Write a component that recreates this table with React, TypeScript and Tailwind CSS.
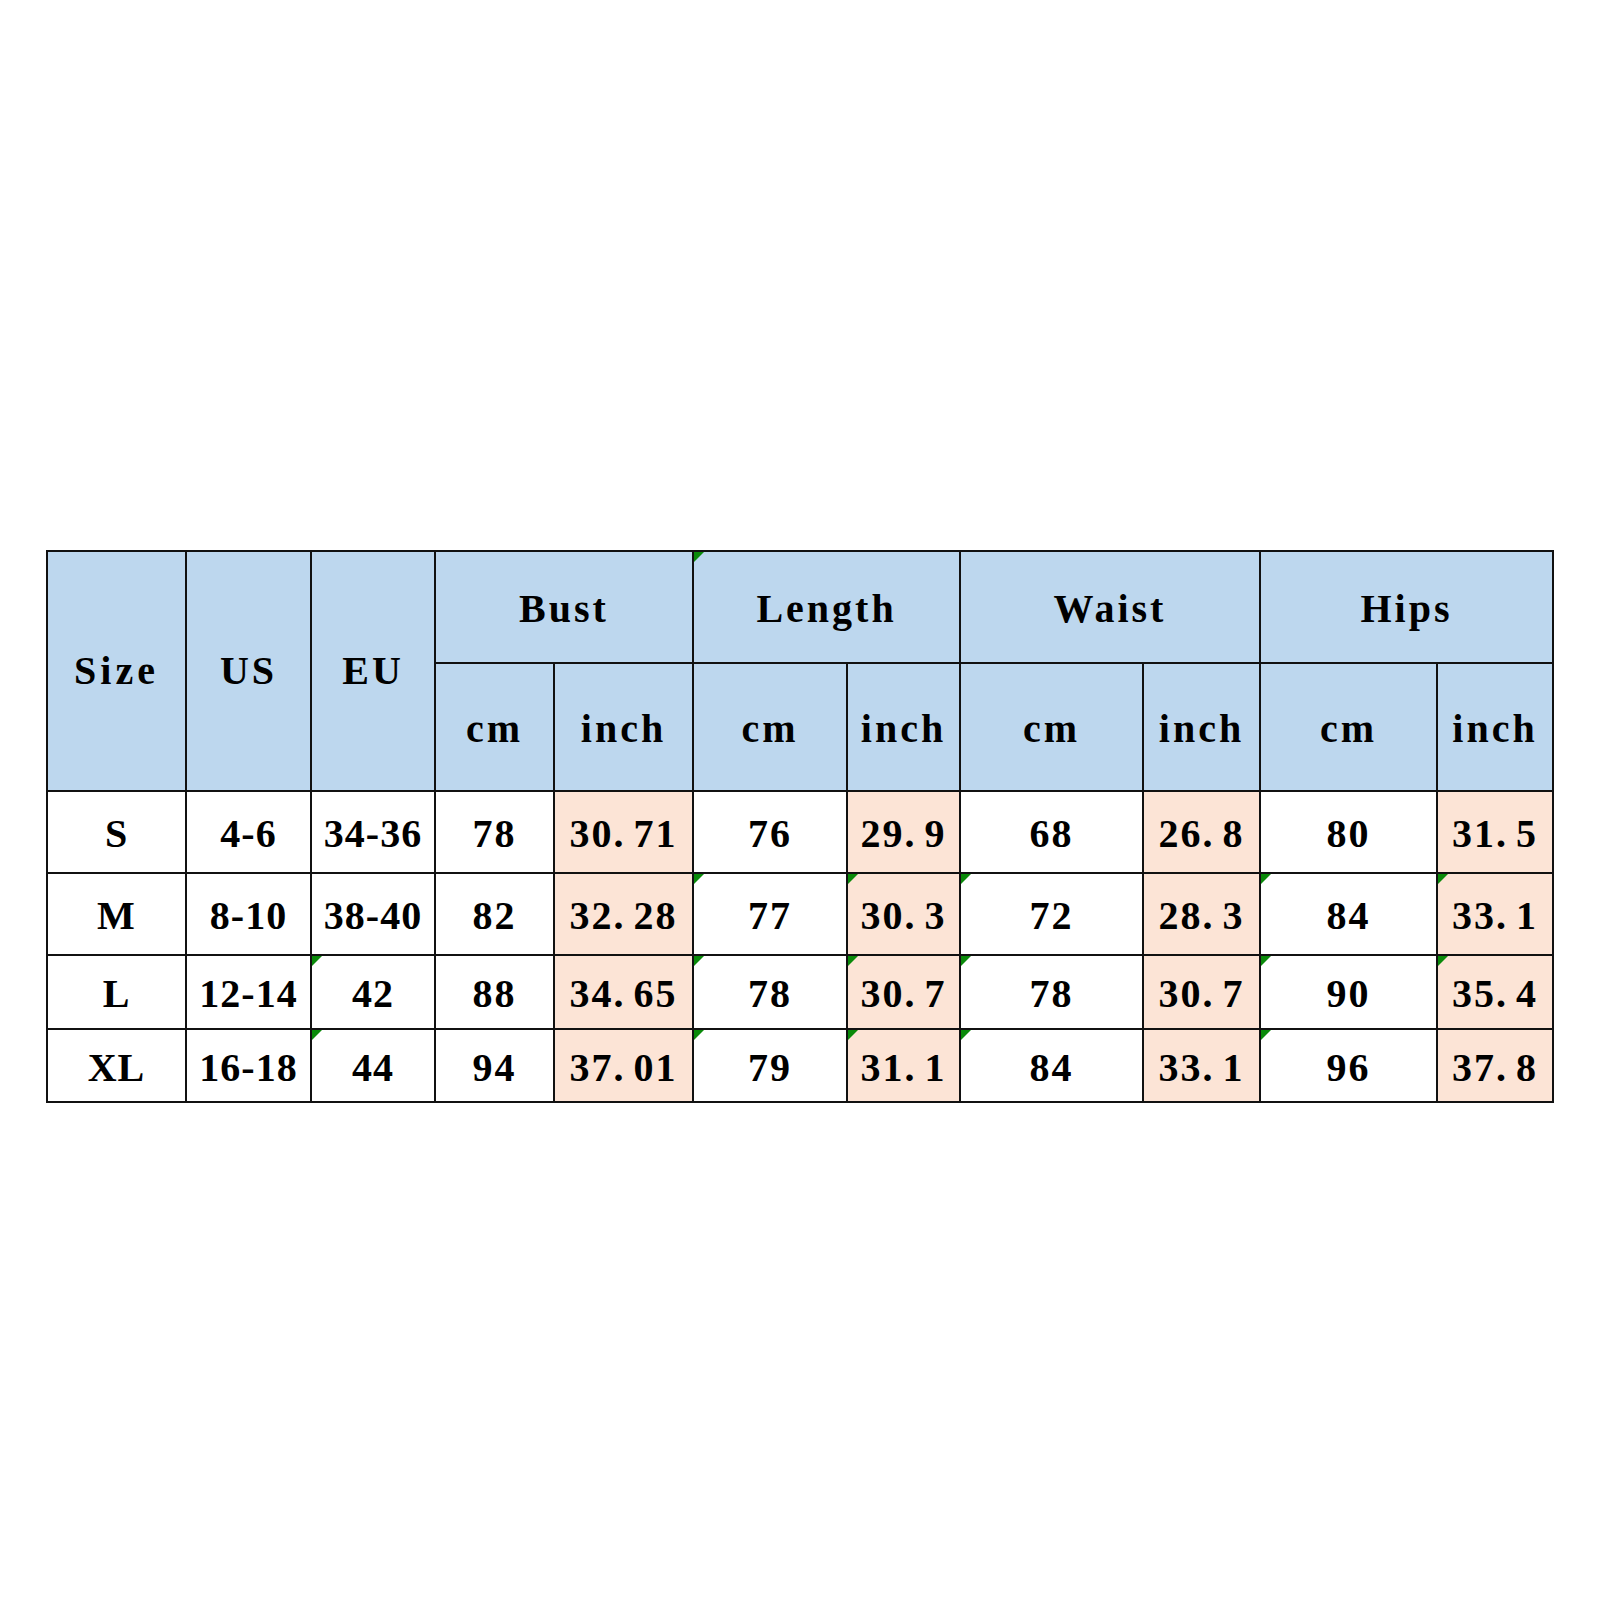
import React from 'react'

type Cell = { text: string; pink?: boolean; mark?: boolean }

const rows: Cell[][] = [
  [
    { text: 'S' }, { text: '4-6' }, { text: '34-36' },
    { text: '78' }, { text: '30.71', pink: true },
    { text: '76' }, { text: '29.9', pink: true },
    { text: '68' }, { text: '26.8', pink: true },
    { text: '80' }, { text: '31.5', pink: true },
  ],
  [
    { text: 'M' }, { text: '8-10' }, { text: '38-40' },
    { text: '82' }, { text: '32.28', pink: true },
    { text: '77', mark: true }, { text: '30.3', pink: true, mark: true },
    { text: '72', mark: true }, { text: '28.3', pink: true },
    { text: '84', mark: true }, { text: '33.1', pink: true, mark: true },
  ],
  [
    { text: 'L' }, { text: '12-14' }, { text: '42', mark: true },
    { text: '88' }, { text: '34.65', pink: true },
    { text: '78', mark: true }, { text: '30.7', pink: true, mark: true },
    { text: '78', mark: true }, { text: '30.7', pink: true },
    { text: '90', mark: true }, { text: '35.4', pink: true, mark: true },
  ],
  [
    { text: 'XL' }, { text: '16-18' }, { text: '44', mark: true },
    { text: '94' }, { text: '37.01', pink: true },
    { text: '79', mark: true }, { text: '31.1', pink: true, mark: true },
    { text: '84', mark: true }, { text: '33.1', pink: true },
    { text: '96', mark: true }, { text: '37.8', pink: true },
  ],
]

function Mark() {
  return (
    <svg className="absolute left-0 top-0" width="10" height="10" viewBox="0 0 10 10">
      <polygon points="0,0 10,0 0,10" fill="#0a8a0a" />
    </svg>
  )
}

// the period sits in a digit-wide slot, like the monospaced original
function Num({ text }: { text: string }) {
  const i = text.indexOf('.')
  if (i < 0) return <>{text}</>
  return (
    <>
      {text.slice(0, i)}
      <span className="inline-block w-[20px] text-left">.</span>
      {text.slice(i + 1)}
    </>
  )
}

const head = 'flex items-center justify-center bg-[#bdd7ee] tracking-[3px]'

export default function App() {
  return (
    <div className="min-h-[1600px] bg-white pl-[46px] pt-[550px] text-black" style={{ fontFamily: '"Liberation Serif", "Times New Roman", serif' }}>
      <div className="grid w-[1508px] grid-cols-[137px_123px_122px_117px_137px_152px_111px_181px_115px_175px_114px] grid-rows-[110px_126px_80px_80px_72px_71px] gap-[2px] bg-[#111] p-[2px] text-[40px] font-bold leading-none">
        <div className={`${head} row-span-2 tracking-[4px]`}>Size</div>
        <div className={`${head} row-span-2`}>US</div>
        <div className={`${head} row-span-2`}>EU</div>
        <div className={`${head} col-span-2 pt-1`}>Bust</div>
        <div className={`${head} relative col-span-2 pt-1`}>
          <Mark />
          Length
        </div>
        <div className={`${head} col-span-2 pt-1`}>Waist</div>
        <div className={`${head} col-span-2 pt-1`}>Hips</div>
        {['cm', 'inch', 'cm', 'inch', 'cm', 'inch', 'cm', 'inch'].map((t, i) => (
          <div key={i} className={`${head} pt-1`}>{t}</div>
        ))}
        {rows.map((row, r) =>
          row.map((c, k) => (
            <div
              key={`${r}-${k}`}
              className={`relative flex items-center justify-center pt-1 ${c.pink ? 'bg-[#fce4d6]' : 'bg-white'} ${k < 3 ? 'tracking-[1px]' : 'tracking-[2px]'}`}
            >
              {c.mark && <Mark />}
              <Num text={c.text} />
            </div>
          ))
        )}
      </div>
    </div>
  )
}
